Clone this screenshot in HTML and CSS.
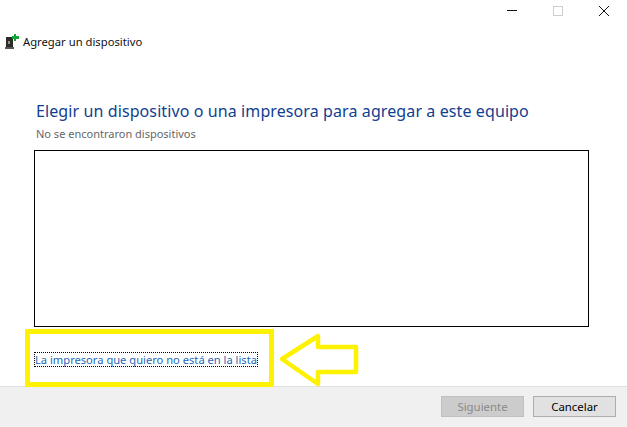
FILE: index.html
```html
<!DOCTYPE html>
<html lang="es">
<head>
  <meta charset="UTF-8" />
  <title>Agregar un dispositivo</title>
  <link rel="stylesheet" href="styles.css">
</head>
<body>
  <div class="window">
    <div class="titlebar">
      <svg width="12" height="10" viewBox="0 0 12 10"><path d="M1 4.5h10" stroke="#111" fill="none"/></svg>
      <svg width="12" height="10" viewBox="0 0 12 10"><rect x="1.5" y="0.5" width="9" height="9" fill="none" stroke="#ccc"/></svg>
      <svg width="12" height="10" viewBox="0 0 12 10"><path d="M1 0l10 10M11 0L1 10" stroke="#111" fill="none"/></svg>
    </div>
    <div class="app-head">
      <svg class="app-icon" width="14" height="17" viewBox="0 0 14 17">
        <path d="M1 3h7v10H1z" fill="#2b2b2b"/>
        <path d="M0 13h9v2H0z" fill="#555"/>
        <path d="M3 7h2v3H3z" fill="#8a9a8a"/>
        <path d="M9 0h2v2h3v3h-3v2H9V5H7V2h2z" fill="#12a538"/>
      </svg>
      <span class="app-title">Agregar un dispositivo</span>
    </div>
    <div class="content">
      <h1 class="heading">Elegir un dispositivo o una impresora para agregar a este equipo</h1>
      <p class="status">No se encontraron dispositivos</p>
      <div class="device-list"></div>
      <a class="missing-link" href="#">La impresora que quiero no está en la lista</a>
    </div>
    <div class="footer">
      <button class="btn btn-disabled" disabled>Siguiente</button>
      <button class="btn">Cancelar</button>
    </div>
    <div class="mark-box"></div>
    <svg class="mark-arrow" width="82" height="54" viewBox="0 0 82 54">
      <path d="M4 26L40 3V14H78V39H40V51Z" fill="none" stroke="#fff200" stroke-width="4.5" stroke-linejoin="round"/>
    </svg>
  </div>
</body>
</html>
```

FILE: styles.css
```css
* {
  box-sizing: border-box;
}
html, body {
  margin: 0;
  height: 100%;
}
body {
  background: #fff;
  font-family: "Noto Sans", "Open Sans", sans-serif;
}
.window {
  position: relative;
  width: 627px;
  height: 427px;
  display: flex;
  flex-direction: column;
  overflow: hidden;
}
.titlebar {
  height: 30px;
  display: flex;
  justify-content: flex-end;
  align-items: flex-start;
  gap: 34px;
  padding: 6px 17px 0 0;
}
.app-head {
  height: 26px;
  display: flex;
  align-items: center;
  gap: 4px;
  padding-left: 5px;
}
.app-title {
  font-size: 11.25px;
  line-height: 22px;
  margin-top: -2px;
  color: #111;
}
.app-icon {
  margin-top: -2px;
}
.content {
  flex: 1;
  padding: 0 38px 0 34px;
}
.heading {
  margin: 43px 0 0 2px;
  font-size: 16px;
  font-weight: 400;
  line-height: 24px;
  letter-spacing: 0.1px;
  color: #11408f;
  white-space: nowrap;
}
.status {
  margin: 4px 0 0 2px;
  font-size: 11px;
  line-height: 14px;
  color: #666;
}
.device-list {
  height: 177px;
  margin-top: 9px;
  border: 1px solid #000;
}
.missing-link {
  display: inline-block;
  margin-top: 25px;
  padding: 0 1px;
  font-size: 11.15px;
  line-height: 15px;
  color: #2468b8;
  text-decoration: none;
  outline: 1px dotted #000;
  outline-offset: -1px;
  white-space: nowrap;
}
.footer {
  height: 41px;
  display: flex;
  justify-content: flex-end;
  gap: 9px;
  padding: 9px 11px 0 0;
  background: #f0f0f0;
  border-top: 1px solid #dfdfdf;
}
.btn {
  width: 83px;
  height: 21px;
  padding: 0;
  font: 11.4px "Noto Sans", "Open Sans", sans-serif;
  color: #000;
  background: #e1e1e1;
  border: 1px solid #adadad;
}
.btn-disabled {
  color: #8a8a8a;
  background: #cccccc;
  border-color: #bfbfbf;
}
.mark-box {
  position: absolute;
  left: 25px;
  top: 329px;
  width: 249px;
  height: 58px;
  border: 5px solid #fff200;
}
.mark-arrow {
  position: absolute;
  left: 278px;
  top: 333px;
}
```
